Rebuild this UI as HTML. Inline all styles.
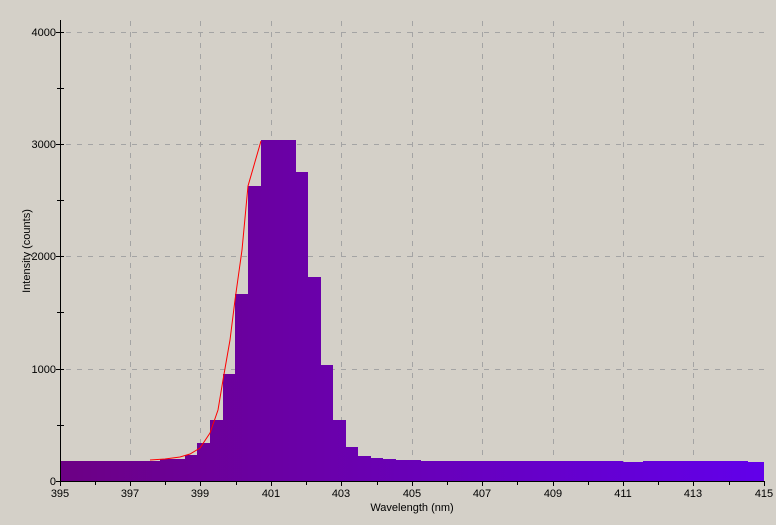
<!DOCTYPE html><html><head><style>body{margin:0;background:#d4d0c8;}svg{display:block;font-family:"Liberation Sans",sans-serif;font-size:11px;}</style></head><body>
<svg width="776" height="525" viewBox="0 0 776 525">
<defs><linearGradient id="g" x1="60" x2="764" y1="0" y2="0" gradientUnits="userSpaceOnUse"><stop offset="0" stop-color="#6c0084"/><stop offset="0.35" stop-color="#6a00a8"/><stop offset="1" stop-color="#6200ea"/></linearGradient></defs>
<rect width="776" height="525" fill="#d4d0c8"/>
<g stroke="#a4a4a4" stroke-dasharray="5,6" stroke-width="1" fill="none">
<path d="M66 32.5H764M66 144.5H764M66 256.5H764M66 369.5H764"/>
<path d="M130.5 21V481M200.5 21V481M271.5 21V481M341.5 21V481M412.5 21V481M482.5 21V481M553.5 21V481M623.5 21V481M693.5 21V481"/>
</g>
<path fill="url(#g)" d="M60 481V461H160V459H185V455H197V443H210V420H223V374H235V294H248V186H261V140H296V172H308V277H321V365H333V420H346V447H358V456H371V458H383V459H396V460H421V461H623V462H643V461H748V462H764V481Z"/>
<polyline fill="none" stroke="#ff0000" stroke-width="1" points="150,460 165,459 180,457 190,454 200,448 210,433 218,410 223,380 230,340 235,300 242,250 248,186 261,141"/>
<g stroke="#000" stroke-width="1" fill="none">
<path d="M60.5 20V481.5H764"/>
<path d="M56 32.5H64M56 144.5H64M56 256.5H64M56 369.5H64M56 481.5H64M57 88.5H64M57 200.5H64M57 312.5H64M57 425.5H64"/>
<path d="M60.5 481V486M95.5 481V485M130.5 481V486M165.5 481V485M200.5 481V486M236.5 481V485M271.5 481V486M306.5 481V485M341.5 481V486M377.5 481V485M412.5 481V486M447.5 481V485M482.5 481V486M517.5 481V485M553.5 481V486M588.5 481V485M623.5 481V486M658.5 481V485M693.5 481V486M729.5 481V485M764.5 481V486"/>
</g>
<g text-anchor="end" fill="#000">
<text x="56" y="36">4000</text><text x="56" y="148">3000</text><text x="56" y="260">2000</text><text x="56" y="373">1000</text><text x="56" y="485">0</text>
</g>
<g text-anchor="middle" fill="#000">
<text x="60" y="497">395</text><text x="130" y="497">397</text><text x="200" y="497">399</text><text x="271" y="497">401</text><text x="341" y="497">403</text><text x="412" y="497">405</text><text x="482" y="497">407</text><text x="553" y="497">409</text><text x="623" y="497">411</text><text x="693" y="497">413</text><text x="764" y="497">415</text>
<text x="412" y="511">Wavelength (nm)</text>
<text transform="translate(30,251) rotate(-90)">Intensity (counts)</text>
</g>
</svg></body></html>
